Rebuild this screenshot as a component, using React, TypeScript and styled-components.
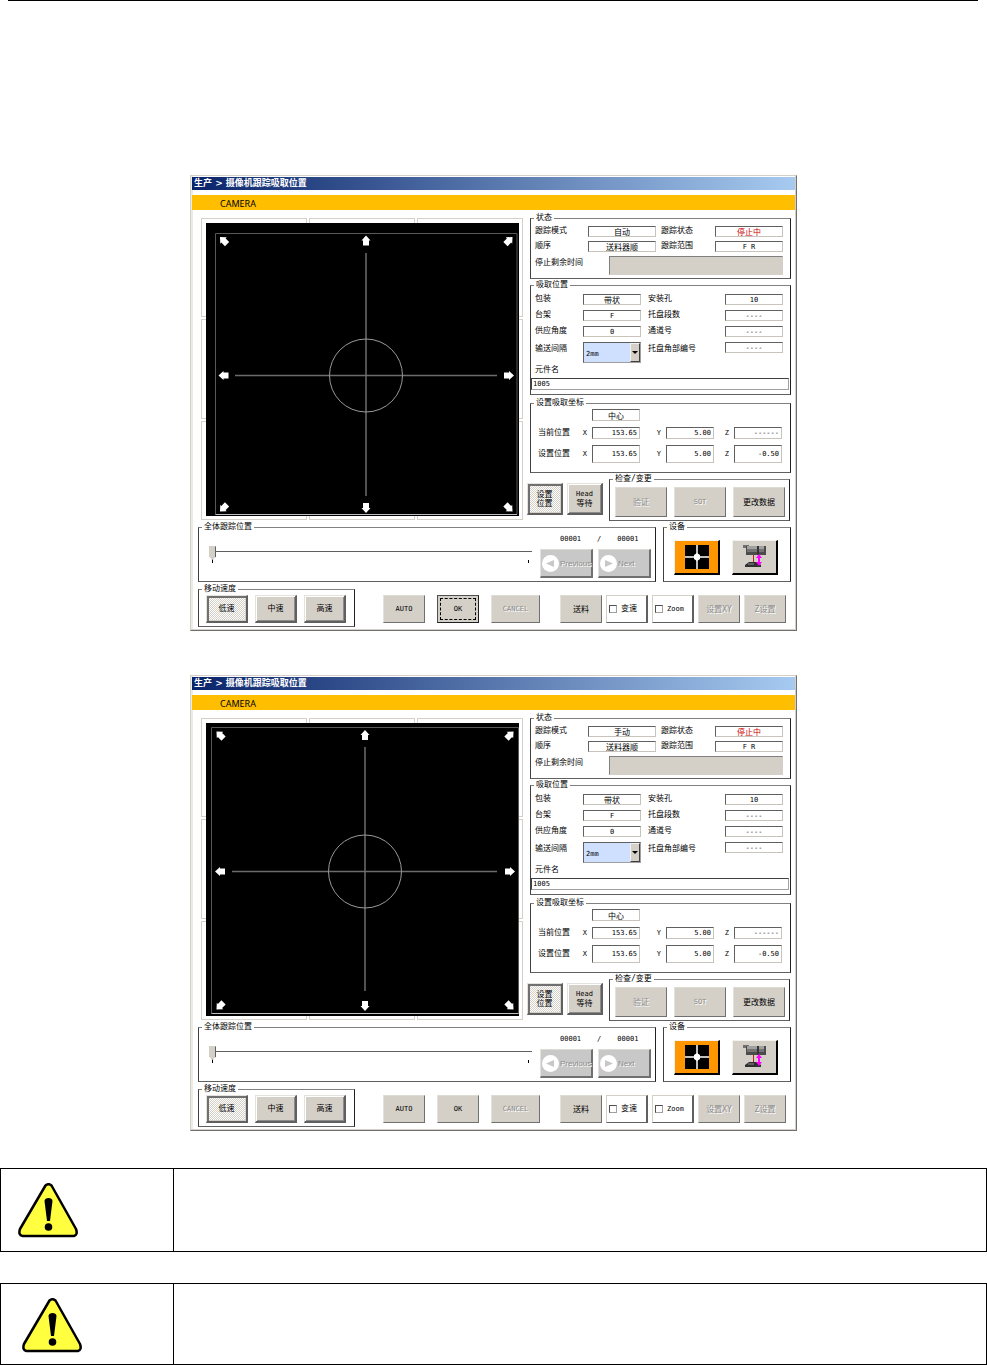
import {FC, useId, useState} from 'react';
import styled, { createGlobalStyle, css } from 'styled-components';

const GlobalStyle = createGlobalStyle`
    *, *::before, *::after {
        box-sizing: border-box;
    }

    body {
        margin: 0;
        background: #fff;
        color: #000;
        font-family: "DejaVu Sans Mono", "Noto Sans CJK SC", monospace;
        font-size: 8px;
        line-height: 10px;
    }

    button, input, select {
        margin: 0;
        font: inherit;
        color: inherit;
    }
`

const HeaderRule = styled.hr`
    height: 1px;
    margin: 0 9px 174px 8px;
    border: 0;
    background: #000;
`

const Screens = styled.main`
    display: flex;
    flex-direction: column;
    align-items: center;
    gap: 44px;
    margin-bottom: 37px;
`

const Window = styled.section`
    width: 100%;
    max-width: 607px;
    padding: 1px;
    border: 1px solid;
    border-color: #d4d0c8 #707070 #707070 #d4d0c8;
    box-shadow: inset -1px -1px 0 #d4d0c8, inset 2px 0 0 #ecebe6;
`

const TitleBar = styled.h2`
    height: 13px;
    margin: 0 0 5px;
    padding: 0 2px;
    background: linear-gradient(90deg, #0a246a, #a6caf0);
    color: #fff;
    font-family: "DejaVu Sans", "Noto Sans CJK SC", sans-serif;
    font-size: 9px;
    font-weight: 700;
    line-height: 13px;
`

const CameraBar = styled.div`
    height: 15px;
    padding: 3px 28px 0;
    background: #ffbf00;
    font-family: "Noto Sans", sans-serif;
    font-size: 9px;
    line-height: 12px;
`

const Body = styled.div`
    padding: 3px 4px 2px 6px;
`

const Upper = styled.div`
    display: grid;
    grid-template-columns: minmax(0, 322fr) minmax(0, 264fr);
    gap: 4px;
    padding-left: 3px;
`

const CameraPanel = styled.div`
    display: grid;
    margin: 5px 0 1px;
`

const Tiles = styled.div`
    display: grid;
    grid-area: 1 / 1;
    grid-template: repeat(3, 1fr) / repeat(3, 1fr);
    gap: 2px;
`

const Tile = styled.div`
    border: 1px solid #d4d0c8;
`

const CameraView = styled.svg`
    grid-area: 1 / 1;
    width: calc(100% - 9px);
    height: 293px;
    margin: 5px 4px 4px 5px;
    background: #000;
`

const Side = styled.div`
    display: flex;
    flex-direction: column;
`

const Group = styled.fieldset`
    min-width: 0;
    margin: 0;
    padding: 0;
    border: 1px solid;
    border-color: #808080 #202020 #606060 #404040;
`

const Legend = styled.legend`
    margin-left: 3px;
    padding: 0 2px;
    line-height: 10px;
`

const StatusGroup = styled(Group)`
    margin: 0 0 1px 3px;
`

const PickupGroup = styled(Group)`
    margin: 0 0 3px 3px;
`

const CoordGroup = styled(Group)`
    margin: 0 0 1px 3px;
`

const StatusGrid = styled.div`
    display: grid;
    grid-template-columns: 53px 1fr 59px 1fr;
    grid-template-rows: 11px 11px 19px;
    row-gap: 4px;
    padding: 3px 7px 3px 4px;
`

const PickupGrid = styled.div`
    display: grid;
    grid-template-columns: 48px 1fr 84px 1fr;
    grid-template-rows: 11px 11px 11px 21px;
    row-gap: 5px;
    padding: 4px 7px 2px 4px;
`

const CoordGrid = styled.div`
    display: grid;
    grid-template-columns: 34px 20px 1fr 26px 1fr 20px 1fr;
    grid-template-rows: 12px 12px 18px;
    row-gap: 6px;
    align-items: center;
    padding: 1px 8px 9px 7px;
`

const FieldLabel = styled.label<{ $indent?: number; $low?: boolean }>`
    padding-top: ${({ $low }) => $low ? '2px' : '0'};
    padding-left: ${({ $indent }) => $indent || 0}px;
    white-space: nowrap;
`

const Axis = styled.label`
    padding-right: 5px;
    font-size: 7px;
    text-align: right;
`

const RowName = styled.span`
    grid-column: 1;
    white-space: nowrap;
`

const TextField = styled.input<{ $align?: string; $latin?: boolean; $column?: number }>`
    width: 100%;
    min-width: 0;
    height: ${({ $column }) => $column ? '12px' : '100%'};
    max-height: 18px;
    padding: 0 2px;
    border: 1px solid;
    border-color: #606060 #c8c4bc #c8c4bc #606060;
    border-radius: 0;
    outline: 0;
    background: #fff;
    font-size: ${({ $latin }) => $latin ? '7px' : '8px'};
    line-height: 9px;
    text-align: ${({ $align }) => $align || 'center'};
    ${({ $column }) => $column && css`grid-column: ${$column};`}
`

const ShortField = styled(TextField)`
    height: 11px;
`

const StopField = styled(ShortField)`
    color: #d00000;
`

const TimeLeft = styled.output`
    grid-column: 2 / 5;
    margin-left: 21px;
    border: 1px solid;
    border-color: #808080 #d4d0c8 #d4d0c8 #808080;
    background: #d4d0c8;
`

const SelectBox = styled.div`
    display: grid;
    border: 1px solid;
    border-color: #606060 #a0a0a0 #a0a0a0 #606060;
`

const Select = styled.select`
    grid-area: 1 / 1;
    min-width: 0;
    padding: 2px 0 0 2px;
    border: 0;
    border-radius: 0;
    outline: 0;
    appearance: none;
    background: #cfe0ff;
    font-size: 7px;
`

const SelectArrow = styled.span`
    display: grid;
    grid-area: 1 / 1;
    place-items: center;
    justify-self: end;
    width: 10px;
    border: 1px solid;
    border-color: #f4f2ee #404040 #404040 #f4f2ee;
    background: #d4d0c8;
    pointer-events: none;

    &::after {
        content: '';
        border: 3px solid transparent;
        border-top-color: #000;
        border-bottom: 0;
    }
`

const PartName = styled.div`
    display: flex;
    flex-direction: column;
    gap: 3px;
    padding: 0 1px 4px 0;
`

const PartField = styled(TextField)`
    height: 12px;
    padding: 0 1px;
    border-color: #404040 #a0a0a0 #a0a0a0 #404040;
`

const Actions = styled.div`
    display: grid;
    grid-template-columns: 36px 36px 1fr;
    gap: 4px;
    padding-right: 1px;
`

const ButtonRow = styled.div<{ $pad?: string; $gap?: number }>`
    display: flex;
    gap: ${({ $gap }) => $gap || 7}px;
    padding: ${({ $pad }) => $pad || '0'};
`

const Button = styled.button<{ $width?: number; $height?: number }>`
    width: ${({ $width }) => $width || 42}px;
    min-width: 0;
    height: ${({ $height }) => $height || 28}px;
    padding: 0;
    border: 1px solid;
    border-color: #dedbd4 #707070 #707070 #e4e2dc;
    border-radius: 0;
    background: #d4d0c8;
    line-height: 9px;
    white-space: nowrap;

    &:disabled {
        color: #8c8c8c;
        text-shadow: 1px 1px 0 #fff;
    }
`

const LatinButton = styled(Button)`
    font-size: 7px;
`

const OkButton = styled(LatinButton)<{ $focused?: boolean }>`
    ${({ $focused }) => $focused && css`
        border-color: #505050 #202020 #202020 #505050;
        outline: 1px dashed #000;
        outline-offset: -4px;
    `}
`

const ThickButton = styled(Button)<{ $pressed?: boolean }>`
    border-width: 1px 2px 2px 1px;
    border-color: #e4e2dc #606060 #606060 #e4e2dc;
    box-shadow: inset 1px 1px 0 #fff, inset -1px -1px 0 #8c8c8c;
    ${({ $pressed }) => $pressed && css`
        background: repeating-conic-gradient(#fff 0 25%, #d4d0c8 0 50%) 0 0 / 2px 2px;
        box-shadow: inset 2px 2px 0 #707070, inset -1px -1px 0 #d4d0c8;
    `}
`

const ModeButton = styled(ThickButton)`
    width: 36px;
    height: 32px;
    margin-top: 9px;
    white-space: normal;
`

const CheckGroup = styled(Group)`
    margin-left: 2px;
`

const Lower = styled.div`
    display: grid;
    grid-template-columns: minmax(0, 1fr) 128px;
    gap: 7px;
    margin: 1px 0 2px;
`

const Tracking = styled.div`
    display: flex;
    gap: 8px;
    padding: 2px 4px 3px 10px;
`

const SliderBox = styled.div`
    flex: 1;
    min-width: 0;
    padding-top: 12px;
`

const Slider = styled.input`
    display: block;
    width: 100%;
    height: 14px;
    appearance: none;
    background: linear-gradient(#606060, #606060) 0 5px / 100% 1px no-repeat;

    &::-webkit-slider-thumb {
        appearance: none;
        width: 7px;
        height: 14px;
        border: 1px solid;
        border-color: #d4d0c8 #606060 #808080 #d4d0c8;
        background: #d4d0c8;
        clip-path: polygon(0 0, 100% 0, 100% 75%, 50% 100%, 0 75%);
    }
`

const Ticks = styled.div`
    height: 3px;
    margin: 0 3px;
    border: solid #000;
    border-width: 0 1px;
`

const Pager = styled.div`
    flex: 0 0 111px;
`

const Counter = styled.div`
    display: flex;
    gap: 16px;
    margin-bottom: 5px;
    padding-left: 20px;
    font-size: 7px;
`

const PagerButton = styled(Button)`
    display: flex;
    align-items: center;
    gap: 1px;
    padding-left: 1px;
    border-width: 1px 2px 2px 1px;
    background: #c8c8c8;
    font-family: "Liberation Sans", sans-serif;
`

const PagerGlyph = styled.svg`
    flex: none;
`

const DeviceButton = styled(Button)<{ $active?: boolean }>`
    display: grid;
    place-items: center;
    border-width: 1px 2px 2px 1px;
    border-color: #f4f2ee #000 #000 #f4f2ee;
    ${({ $active }) => $active && css`background: #ff9600;`}
`

const Footer = styled.div`
    display: flex;
    align-items: flex-end;
`

const SpeedGroup = styled(Group)`
    flex: 0 0 157px;
`

const CommandRow = styled(ButtonRow)`
    margin-left: 28px;
    padding-bottom: 4px;
`

const ToolRow = styled(ButtonRow)`
    margin-left: auto;
    padding: 0 5px 4px 0;
`

const Toggle = styled.label`
    display: flex;
    align-items: center;
    gap: 4px;
    width: 42px;
    height: 28px;
    padding-left: 2px;
    border: 1px solid;
    border-color: #d4d0c8 #606060 #606060 #d4d0c8;
    border-right-width: 2px;
    white-space: nowrap;
`

const SmallText = styled.span`
    font-size: 7px;
`

const CheckBox = styled.input`
    flex: none;
    width: 8px;
    height: 8px;
    appearance: none;
    border: 1px solid;
    border-color: #505050 #a0a0a0 #a0a0a0 #505050;
    background: #fff;

    &:checked {
        background: #404040;
    }
`

const Notices = styled.div`
    display: grid;
    gap: 31px;
`

const Notice = styled.aside<{ $height: number }>`
    display: grid;
    grid-template-columns: 173px 1fr;
    min-height: ${({ $height }) => $height}px;
    border: 1px solid #000;
`

const NoticeIcon = styled.div<{ $left: number }>`
    padding: 14px 0 0 ${({ $left }) => $left}px;
    border-right: 1px solid #000;
`

const Sign = styled.svg`
    display: block;
`

interface ICamera {
    frame: { x: number, y: number, right: number, bottom: number },
    center: { x: number, y: number },
    reach: { left: number, right: number, top: number, bottom: number },
    arrows: { left: number, right: number, top: number, bottom: number },
}

const autoCamera: ICamera = {
    frame: { x: 9.5, y: 10.5, right: 311, bottom: 291.5 },
    center: { x: 160, y: 152.5 },
    reach: { left: 29, right: 291, top: 30, bottom: 273 },
    arrows: { left: 17.5, right: 303, top: 17.5, bottom: 285 },
}

const manualCamera: ICamera = {
    frame: { x: 5.5, y: 4.5, right: 312.5, bottom: 290.5 },
    center: { x: 159, y: 148.5 },
    reach: { left: 26, right: 291, top: 24, bottom: 268 },
    arrows: { left: 14, right: 304, top: 12, bottom: 283 },
}

const Camera: FC<{ value: ICamera }> = ({value}) => {
    const { frame, center, reach, arrows } = value
    // angle 0 points up
    const heads = [
        [arrows.left, arrows.top, -45],
        [center.x, arrows.top, 0],
        [arrows.right, arrows.top, 45],
        [arrows.left, center.y, -90],
        [arrows.right, center.y, 90],
        [arrows.left, arrows.bottom, -135],
        [center.x, arrows.bottom, 180],
        [arrows.right, arrows.bottom, 135],
    ]

    return(
        <CameraPanel>
            <Tiles>
                {Array.from({ length: 9 }, (_, i) => <Tile key={i} />)}
            </Tiles>
            <CameraView viewBox="0 0 313 293" role="img" aria-label="CAMERA">
                <path
                    d={`M${frame.x} ${frame.bottom}V${frame.y}H${frame.right}V${frame.bottom}`}
                    fill="none" stroke="#585858"
                />
                <path d={`M${frame.x} ${frame.bottom}H${frame.right}`} stroke="#c0c0c0" />
                <path
                    d={`M${reach.left} ${center.y}H${reach.right}M${center.x} ${reach.top}V${reach.bottom}`}
                    stroke="#6c6c6c" strokeWidth="1.5"
                />
                <circle cx={center.x} cy={center.y} r="36.5" fill="none" stroke="#9a9a9a" />
                {heads.map(([x, y, angle]) =>
                    <path
                        key={`${x}-${y}`}
                        d="M0 -5L4.5 0H3V5H-3V0H-4.5Z"
                        fill="#fff"
                        transform={`translate(${x} ${y}) rotate(${angle})`}
                    />
                )}
            </CameraView>
        </CameraPanel>
    )
};

interface IField {
    label: string,
    value: string,
    latin?: boolean,
    indent?: number,
    stop?: boolean,
    low?: boolean,
}

const Field: FC<IField> = ({label, value, latin, indent, stop, low}) => {
    const id = useId()
    const Input = stop ? StopField : ShortField

    return(
        <>
            <FieldLabel htmlFor={id} $indent={indent} $low={low}>{label}</FieldLabel>
            <Input id={id} value={value} $latin={latin} readOnly />
        </>
    )
};

const AxisField: FC<{ axis: string, value: string }> = ({axis, value}) => {
    const id = useId()

    return(
        <>
            <Axis htmlFor={id}>{axis}</Axis>
            <TextField id={id} value={value} $align="right" $latin readOnly />
        </>
    )
};

const PagerIcon: FC<{ back?: boolean }> = ({back}) => (
    <PagerGlyph width="17" height="17" viewBox="0 0 17 17" aria-hidden="true">
        <circle cx="8.5" cy="8.5" r="8.5" fill="#fff" />
        <path d={back ? 'M12 5V12L4 8.5Z' : 'M5 5V12L13 8.5Z'} fill="#c8c8c8" />
    </PagerGlyph>
);

const TargetIcon = () => (
    <svg width="24" height="24" viewBox="0 0 24 24" aria-hidden="true">
        <path d="M0 0H24V24H0Z" fill="#000" />
        <path d="M0 12H24M12 0V24" stroke="#fff" strokeWidth="1.5" />
        <path d="M12 8L15 10V14L12 16L9 14V10Z" fill="#fff" />
    </svg>
);

const NozzleIcon = () => (
    <svg width="24" height="24" viewBox="0 0 24 24" aria-hidden="true">
        <path d="M0 0H6V8H3V3H0Z" fill="#707070" />
        <path d="M3 1H23V10H3Z" fill="#4c4c4c" />
        <path d="M4 1H14V4H4ZM16 1H21V4H16Z" fill="#a0a0a0" />
        <path d="M4 4H14V7H4ZM16 4H21V7H16Z" fill="#747474" />
        <path d="M15 1V10" stroke="#202020" />
        <path d="M10.500 10V18" stroke="#c02020" />
        <path d="M6 17H14L18 20V22H2V20Z" fill="#303030" />
        <path d="M5 19H11" stroke="#909090" />
        <path d="M16 9L19 13H17V17H19L16 21L13 17H15V13H13Z" fill="#ff00ff" />
    </svg>
);

const WarningIcon = () => (
    <Sign width="60" height="55" viewBox="0 0 60 55" aria-hidden="true">
        <path
            d="M27.500 2.500Q30.500 0 33.500 2.500L58 46Q60 52 56 53H4.500Q0 52 2 46Z"
            fill="#ffff40" stroke="#000" strokeWidth="2.500" strokeLinejoin="round"
        />
        <path d="M26.500 18C26.500 14 34.500 14 34.500 18L32 38H29Z" fill="#000" />
        <circle cx="30.500" cy="44" r="3.800" fill="#000" />
    </Sign>
);

interface IScreen {
    mode: string,
    camera: ICamera,
    okFocused?: boolean,
}

const TrackingScreen: FC<IScreen> = ({mode, camera, okFocused}) => {
    const id = useId()
    const [speed, setSpeed] = useState('低速')
    const [position, setPosition] = useState(0)

    return(
        <Window>
            <TitleBar>生产 &gt; 摄像机跟踪吸取位置</TitleBar>
            <CameraBar>CAMERA</CameraBar>
            <Body>
                <Upper>
                    <Camera value={camera} />
                    <Side>
                        <StatusGroup>
                            <Legend>状态</Legend>
                            <StatusGrid>
                                <Field label="跟踪模式" value={mode} />
                                <Field label="跟踪状态" value="停止中" indent={5} stop />
                                <Field label="顺序" value="送料器顺" />
                                <Field label="跟踪范围" value="F R" indent={5} latin />
                                <FieldLabel htmlFor={`${id}-left`} $low>停止剩余时间</FieldLabel>
                                <TimeLeft id={`${id}-left`} />
                            </StatusGrid>
                        </StatusGroup>
                        <PickupGroup>
                            <Legend>吸取位置</Legend>
                            <PickupGrid>
                                <Field label="包装" value="带状" />
                                <Field label="安装孔" value="10" indent={7} latin />
                                <Field label="台架" value="F" latin />
                                <Field label="托盘段数" value="----" indent={7} latin />
                                <Field label="供应角度" value="0" latin />
                                <Field label="通道号" value="----" indent={7} latin />
                                <FieldLabel htmlFor={`${id}-pitch`} $low>输送间隔</FieldLabel>
                                <SelectBox>
                                    <Select id={`${id}-pitch`} defaultValue="2mm">
                                        <option>2mm</option>
                                    </Select>
                                    <SelectArrow />
                                </SelectBox>
                                <Field label="托盘角部编号" value="----" indent={7} latin low />
                            </PickupGrid>
                            <PartName>
                                <FieldLabel htmlFor={`${id}-part`} $indent={4}>元件名</FieldLabel>
                                <PartField id={`${id}-part`} defaultValue="1005" $align="left" $latin />
                            </PartName>
                        </PickupGroup>
                        <CoordGroup>
                            <Legend>设置吸取坐标</Legend>
                            <CoordGrid>
                                <TextField aria-label="设置吸取坐标" value="中心" $column={3} readOnly />
                                <RowName>当前位置</RowName>
                                <AxisField axis="X" value="153.65" />
                                <AxisField axis="Y" value="5.00" />
                                <AxisField axis="Z" value="------" />
                                <RowName>设置位置</RowName>
                                <AxisField axis="X" value="153.65" />
                                <AxisField axis="Y" value="5.00" />
                                <AxisField axis="Z" value="-0.50" />
                            </CoordGrid>
                        </CoordGroup>
                        <Actions>
                            <ModeButton $pressed>设置<br />位置</ModeButton>
                            <ModeButton><SmallText>Head</SmallText><br />等待</ModeButton>
                            <CheckGroup>
                                <Legend>检查/变更</Legend>
                                <ButtonRow $pad="3px 4px 3px 5px">
                                    <Button $width={52} $height={30} disabled>验证</Button>
                                    <LatinButton $width={52} $height={30} disabled>SOT</LatinButton>
                                    <Button $width={52} $height={30}>更改数据</Button>
                                </ButtonRow>
                            </CheckGroup>
                        </Actions>
                    </Side>
                </Upper>
                <Lower>
                    <Group>
                        <Legend>全体跟踪位置</Legend>
                        <Tracking>
                            <SliderBox>
                                <Slider
                                    type="range"
                                    aria-label="全体跟踪位置"
                                    value={position}
                                    onChange={(e) => setPosition(Number(e.target.value))}
                                />
                                <Ticks />
                            </SliderBox>
                            <Pager>
                                <Counter>
                                    <span>00001</span>
                                    <span>/</span>
                                    <span>00001</span>
                                </Counter>
                                <ButtonRow $gap={5}>
                                    <PagerButton $width={53} $height={29} disabled><PagerIcon back />Previous</PagerButton>
                                    <PagerButton $width={53} $height={29} disabled><PagerIcon />Next</PagerButton>
                                </ButtonRow>
                            </Pager>
                        </Tracking>
                    </Group>
                    <Group>
                        <Legend>设备</Legend>
                        <ButtonRow $pad="8px 10px 6px" $gap={12}>
                            <DeviceButton $width={46} $height={35} $active aria-label="Camera"><TargetIcon /></DeviceButton>
                            <DeviceButton $width={46} $height={35} aria-label="Head"><NozzleIcon /></DeviceButton>
                        </ButtonRow>
                    </Group>
                </Lower>
                <Footer>
                    <SpeedGroup>
                        <Legend>移动速度</Legend>
                        <ButtonRow $pad="1px 5px 3px 7px">
                            {['低速', '中速', '高速'].map((name) =>
                                <ThickButton key={name} $pressed={name === speed} onClick={() => setSpeed(name)}>
                                    {name}
                                </ThickButton>
                            )}
                        </ButtonRow>
                    </SpeedGroup>
                    <CommandRow $gap={12}>
                        <LatinButton>AUTO</LatinButton>
                        <OkButton $focused={okFocused}>OK</OkButton>
                        <LatinButton $width={49} disabled>CANCEL</LatinButton>
                    </CommandRow>
                    <ToolRow $gap={4}>
                        <Button>送料</Button>
                        <Toggle><CheckBox type="checkbox" />变速</Toggle>
                        <Toggle><CheckBox type="checkbox" /><SmallText>Zoom</SmallText></Toggle>
                        <Button disabled>设置XY</Button>
                        <Button disabled>Z设置</Button>
                    </ToolRow>
                </Footer>
            </Body>
        </Window>
    )
};

const App = () => {
    return(
        <>
            <GlobalStyle />
            <HeaderRule />
            <Screens>
                <TrackingScreen mode="自动" camera={autoCamera} okFocused />
                <TrackingScreen mode="手动" camera={manualCamera} />
            </Screens>
            <Notices>
                <Notice $height={84}>
                    <NoticeIcon $left={17}><WarningIcon /></NoticeIcon>
                </Notice>
                <Notice $height={82}>
                    <NoticeIcon $left={21}><WarningIcon /></NoticeIcon>
                </Notice>
            </Notices>
        </>
    )
};

export default App;
